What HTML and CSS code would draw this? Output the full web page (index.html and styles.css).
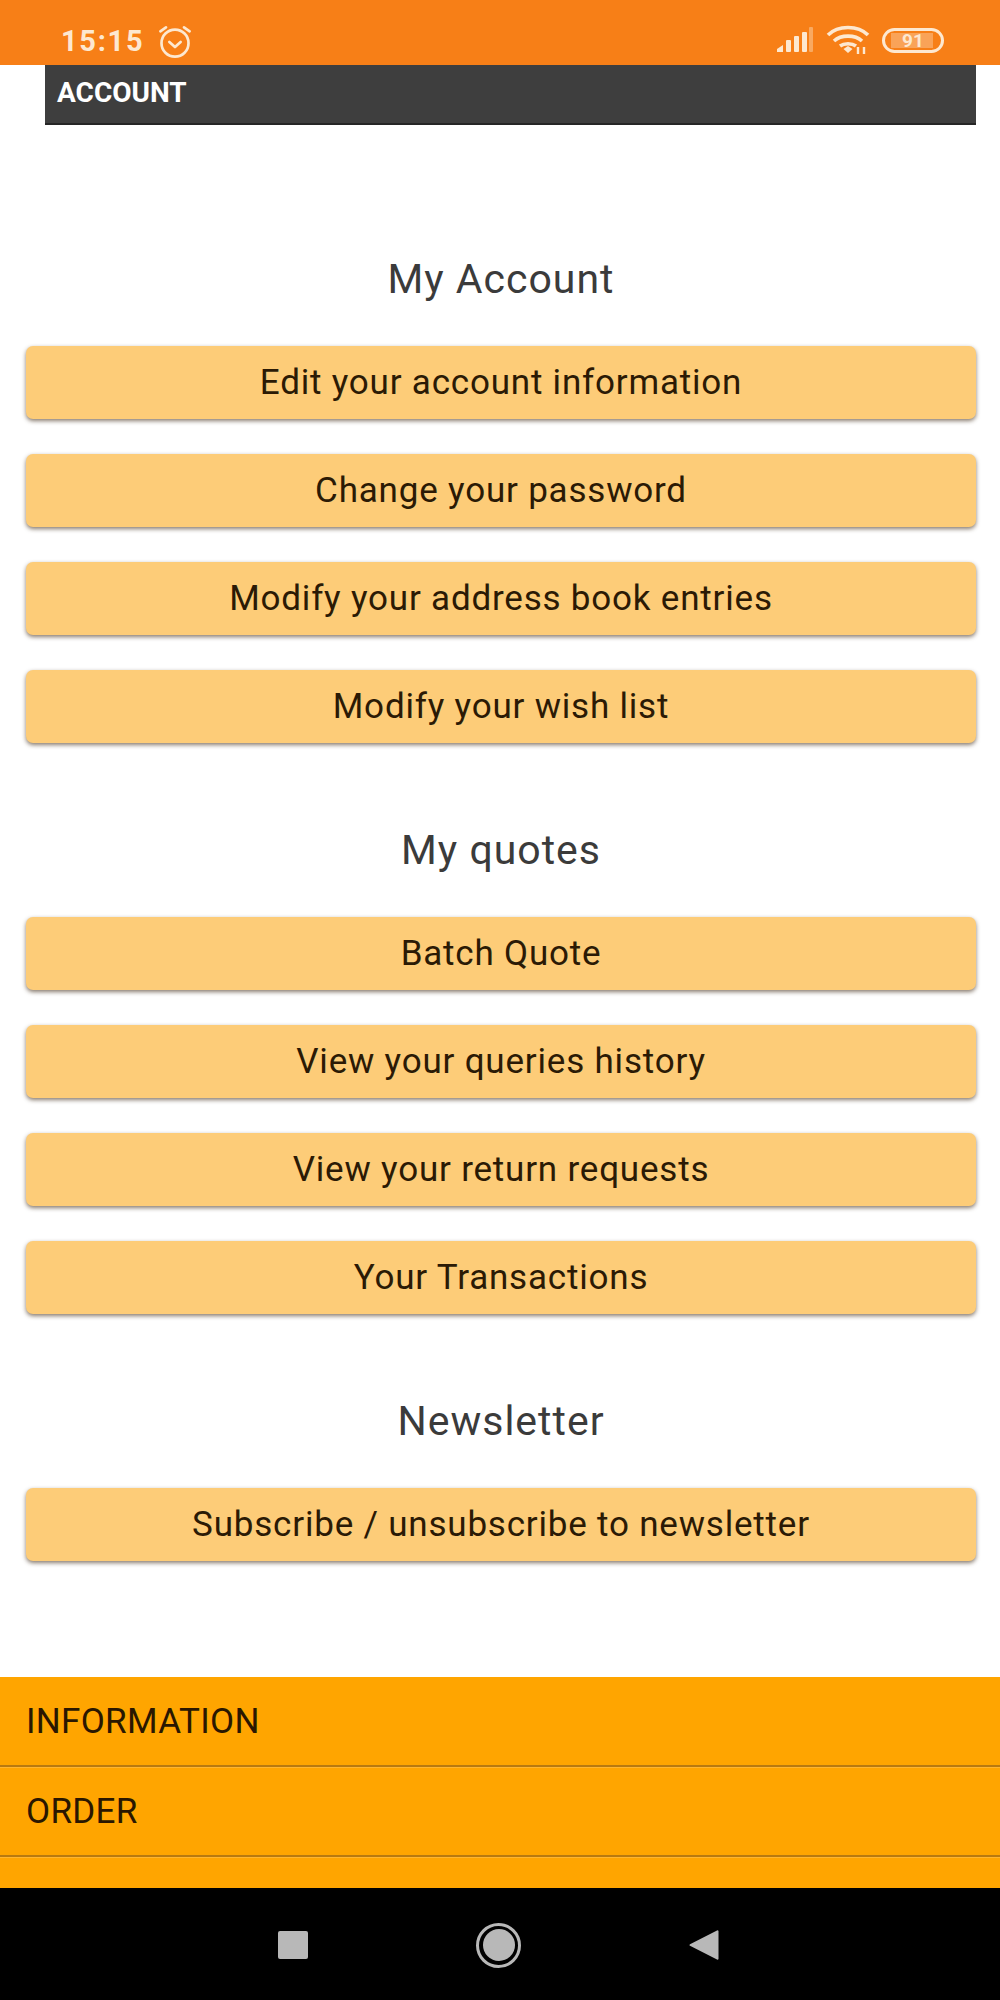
FILE: index.html
```html
<!DOCTYPE html>
<html lang="en">
<head>
    <meta charset="UTF-8">
    <title>Account</title>
    <link rel="stylesheet" href="styles.css">
</head>
<body>

    <!-- Status bar -->
    <div class="status-bar">
        <div class="status-left">
            <span class="clock">15:15</span>
            <svg class="alarm" width="36" height="36" viewBox="0 0 32 32" fill="none" stroke="#fde8d0" stroke-width="2.4" stroke-linecap="round" stroke-linejoin="round">
                <circle cx="16" cy="17" r="12"/>
                <path d="M11 16l5 4.5 5-4.5"/>
                <path d="M3 6.5l5-3.5M29 6.5l-5-3.5"/>
            </svg>
        </div>
        <div class="status-right">
            <svg width="38" height="26" viewBox="0 0 38 26" fill="#fde8d0">
                <path d="M1 25v-3l6-4v7z"/>
                <rect x="10" y="13" width="5" height="12" rx="1"/>
                <rect x="18" y="9" width="5" height="16" rx="1"/>
                <rect x="26" y="5" width="5" height="20" rx="1"/>
                <rect x="33" y="0" width="4" height="25" rx="1" opacity="0.4"/>
            </svg>
            <svg class="wifi" width="44" height="30" viewBox="0 0 44 30" fill="none" stroke="#fde8d0" stroke-width="3.6">
                <path d="M2 10c10-10 30-10 40 0"/>
                <path d="M8 16c7-6.500 21-6.500 28 0"/>
                <path d="M14 21c4-3 12-3 16 0"/>
                <path d="M17.500 24l4.500-3 4.500 3-4.500 4z" fill="#fde8d0" stroke="none"/>
                <path d="M32 22v7M38 22v7" stroke-width="2.400"/>
            </svg>
            <div class="battery">
                <div class="battery-fill"></div>
                <span class="battery-text">91</span>
            </div>
        </div>
    </div>

    <!-- Page title -->
    <header class="title-bar">ACCOUNT</header>

    <!-- Account links -->
    <main class="content">
        <section class="group">
            <h2>My Account</h2>
            <a class="link-btn">Edit your account information</a>
            <a class="link-btn">Change your password</a>
            <a class="link-btn">Modify your address book entries</a>
            <a class="link-btn">Modify your wish list</a>
        </section>
        <section class="group">
            <h2>My quotes</h2>
            <a class="link-btn">Batch Quote</a>
            <a class="link-btn">View your queries history</a>
            <a class="link-btn">View your return requests</a>
            <a class="link-btn">Your Transactions</a>
        </section>
        <section class="group">
            <h2>Newsletter</h2>
            <a class="link-btn">Subscribe / unsubscribe to newsletter</a>
        </section>
    </main>

    <!-- Footer menu -->
    <footer class="footer-menu">
        <div class="footer-item">INFORMATION</div>
        <div class="footer-item">ORDER</div>
        <div class="footer-item footer-cut"></div>
    </footer>

    <!-- Navigation bar -->
    <nav class="nav-bar">
        <div class="nav-square"></div>
        <div class="nav-home"><div class="nav-home-dot"></div></div>
        <svg width="30" height="32" viewBox="0 0 30 32" fill="#b8b8b8">
            <path d="M28 1.500a1 1 0 0 1 1.500 1v27a1 1 0 0 1-1.500 1L1 16.800a1 1 0 0 1 0-1.600z"/>
        </svg>
    </nav>

</body>
</html>
```

FILE: styles.css
```css
/* Global Styling */
body {
    font-family: Roboto, "Noto Sans", sans-serif;
    margin: 0;
    padding: 0;
    height: 2000px;
    overflow: hidden;
    background-color: #fff;
    display: flex;
    flex-direction: column;
}

/* Status bar */
.status-bar {
    height: 65px;
    flex: none;
    background-color: #f77f17;
    display: flex;
    justify-content: space-between;
    align-items: center;
    padding: 0 56px 0 61px;
    color: #fde8d0;
}

.status-left,
.status-right {
    display: flex;
    align-items: center;
}

.status-left {
    gap: 13px;
    margin-top: 17px;
}

.status-right {
    gap: 12px;
    margin-top: 15px;
}

.clock {
    font-size: 29px;
    font-weight: 700;
    letter-spacing: 1.7px;
    line-height: 32px;
}

.alarm {
    margin-top: 1px;
}

.battery {
    position: relative;
    width: 62px;
    height: 25px;
    box-sizing: border-box;
    border: 3px solid #fde8d0;
    border-radius: 13px;
    overflow: hidden;
    display: flex;
    align-items: center;
    justify-content: center;
}

.battery-fill {
    position: absolute;
    left: 6px;
    top: 2px;
    bottom: 2px;
    width: 42px;
    background-color: rgba(253, 232, 208, 0.35);
}

.battery-text {
    position: relative;
    font-size: 19px;
    font-weight: 700;
    line-height: 19px;
}

/* Title bar */
.title-bar {
    flex: none;
    height: 60px;
    box-sizing: border-box;
    margin: 0 24px 0 45px;
    padding: 0 12px;
    background-color: #3e3e3e;
    border-bottom: 2px solid #262626;
    color: #fff;
    font-size: 28px;
    font-weight: 700;
    line-height: 55px;
}

/* Link groups */
.content {
    flex: 1;
    padding: 0 24px 0 26px;
}

.group {
    display: flex;
    flex-direction: column;
    gap: 34px;
    margin-top: 75px;
}

.group:first-child {
    margin-top: 123px;
}

.group h2 {
    margin: 0;
    height: 64px;
    line-height: 62px;
    font-size: 41px;
    font-weight: 400;
    letter-spacing: 1px;
    text-align: center;
    color: #3b3b3b;
}

.link-btn {
    display: block;
    height: 73px;
    line-height: 74px;
    margin-bottom: 1px;
    text-align: center;
    font-size: 35px;
    letter-spacing: 0.8px;
    color: #2b1a05;
    background-color: #fdcc78;
    border-radius: 7px;
    box-shadow: 0 2px 4px rgba(70, 50, 30, 0.65);
}

/* Footer menu */
.footer-menu {
    flex: none;
    height: 211px;
    overflow: hidden;
    background-color: #ffa500;
}

.footer-item {
    height: 90px;
    box-sizing: border-box;
    padding-left: 26px;
    line-height: 90px;
    font-size: 35px;
    letter-spacing: 0.3px;
    color: #2a1700;
    border-bottom: 2px solid #b87a10;
    box-shadow: 0 1px 0 #ffb52e;
}

.footer-cut {
    border-bottom: none;
    box-shadow: none;
}

/* Navigation bar */
.nav-bar {
    flex: none;
    height: 112px;
    background-color: #000;
    display: flex;
    align-items: center;
    gap: 168px;
    padding: 2px 0 0 278px;
    box-sizing: border-box;
}

.nav-square {
    width: 30px;
    height: 28px;
    background-color: #b8b8b8;
    border-radius: 2px;
}

.nav-home {
    width: 45px;
    height: 45px;
    box-sizing: border-box;
    border: 3px solid #b8b8b8;
    border-radius: 50%;
    display: flex;
    align-items: center;
    justify-content: center;
}

.nav-home-dot {
    width: 32px;
    height: 32px;
    border-radius: 50%;
    background-color: #b8b8b8;
}
```
